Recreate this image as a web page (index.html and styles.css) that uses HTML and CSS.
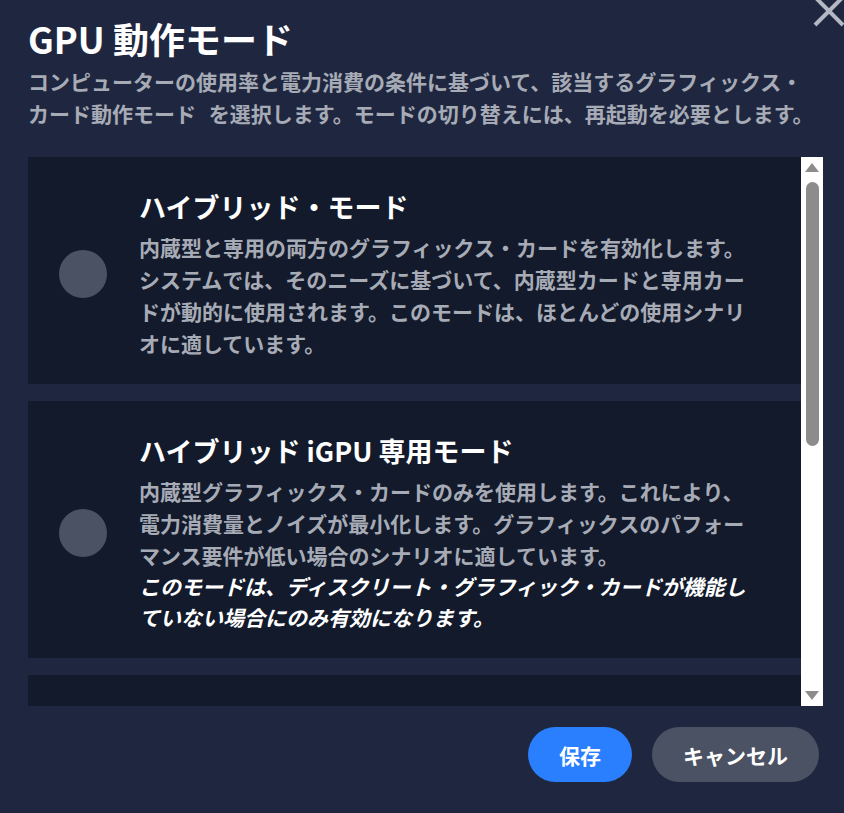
FILE: index.html
```html
<!DOCTYPE html>
<html lang="ja">
<head>
  <meta charset="UTF-8">
  <meta name="viewport" content="width=device-width, initial-scale=1.0">
  <title>GPU 動作モード</title>
  <link rel="stylesheet" href="styles.css">
</head>
<body>

  <div class="dialog">
    <button class="close-btn" aria-label="閉じる">
      <svg width="34" height="34" viewBox="0 0 34 34">
        <line x1="3" y1="3" x2="31" y2="31" stroke="#b3b8c3" stroke-width="4" />
        <line x1="31" y1="3" x2="3" y2="31" stroke="#b3b8c3" stroke-width="4" />
      </svg>
    </button>

    <h1 class="dialog-title">GPU 動作モード</h1>
    <p class="dialog-desc">コンピューターの使用率と電力消費の条件に基づいて、該当するグラフィックス・カード動作モード を選択します。モードの切り替えには、再起動を必要とします。</p>

    <div class="mode-area">
      <div class="mode-list">
        <div class="mode-card">
          <span class="radio"></span>
          <div class="mode-body">
            <h3 class="mode-title">ハイブリッド・モード</h3>
            <p class="mode-text">内蔵型と専用の両方のグラフィックス・カードを有効化します。システムでは、そのニーズに基づいて、内蔵型カードと専用カードが動的に使用されます。このモードは、ほとんどの使用シナリオに適しています。</p>
          </div>
        </div>

        <div class="mode-card">
          <span class="radio"></span>
          <div class="mode-body">
            <h3 class="mode-title">ハイブリッド iGPU 専用モード</h3>
            <p class="mode-text">内蔵型グラフィックス・カードのみを使用します。これにより、電力消費量とノイズが最小化します。グラフィックスのパフォーマンス要件が低い場合のシナリオに適しています。</p>
            <p class="mode-note">このモードは、ディスクリート・グラフィック・カードが機能していない場合にのみ有効になります。</p>
          </div>
        </div>

        <!-- next mode, only its top edge is in view -->
        <div class="mode-card mode-card-next"></div>
      </div>

      <div class="scrollbar">
        <span class="arrow up"></span>
        <div class="track">
          <div class="thumb"></div>
        </div>
        <span class="arrow down"></span>
      </div>
    </div>

    <div class="dialog-footer">
      <button class="btn btn-save">保存</button>
      <button class="btn btn-cancel">キャンセル</button>
    </div>
  </div>

</body>
</html>
```

FILE: styles.css
```css
body {
  margin: 0;
  padding: 0;
  background-color: #1f2740;
  font-family: "Noto Sans CJK JP", "Noto Sans", sans-serif;
  font-weight: bold;
  overflow: hidden;
}

.dialog {
  position: relative;
  height: 813px;
  box-sizing: border-box;
  padding: 16px 21px 0 28px;
}

.close-btn {
  position: absolute;
  top: -6px;
  left: 812px;
  padding: 0;
  border: none;
  background: none;
  cursor: pointer;
}

.close-btn svg {
  display: block;
}

.dialog-title {
  margin: 0;
  font-size: 36px;
  line-height: 44px;
  color: #ffffff;
}

.dialog-desc {
  margin: 5px 0 0;
  font-size: 21px;
  line-height: 32px;
  word-spacing: 8px;
  color: #a7abb6;
}

.mode-area {
  display: flex;
  margin-top: 28px;
  height: 549px;
}

.mode-list {
  flex: 1;
  overflow: hidden;
  display: flex;
  flex-direction: column;
  gap: 17px;
}

.mode-card {
  flex-shrink: 0;
  display: flex;
  align-items: center;
  gap: 32px;
  padding: 32px 40px 25px 31px;
  background-color: #121a2b;
}

.mode-card-next {
  min-height: 200px;
}

.radio {
  flex-shrink: 0;
  width: 48px;
  height: 48px;
  border-radius: 50%;
  background-color: #4b5264;
}

.mode-body {
  flex: 1;
}

.mode-title {
  margin: 0 0 6px;
  font-size: 27px;
  line-height: 36px;
  color: #ffffff;
}

.mode-text,
.mode-note {
  margin: 0;
  font-size: 21px;
  line-height: 32px;
  color: #a7abb6;
}

.mode-note {
  line-height: 31px;
  color: #ffffff;
  font-style: italic;
}

.scrollbar {
  width: 22px;
  flex-shrink: 0;
  background-color: #ffffff;
  display: flex;
  flex-direction: column;
  align-items: center;
}

.arrow {
  width: 0;
  height: 0;
  border-left: 7px solid transparent;
  border-right: 7px solid transparent;
}

.arrow.up {
  margin-top: 6px;
  border-bottom: 9px solid #8c8c8c;
}

.arrow.down {
  margin-bottom: 6px;
  border-top: 9px solid #8c8c8c;
}

.track {
  flex: 1;
  width: 100%;
  padding-top: 10px;
  box-sizing: border-box;
  display: flex;
  justify-content: center;
}

.thumb {
  width: 13px;
  height: 264px;
  border-radius: 7px;
  background-color: #8c8c8c;
}

.dialog-footer {
  display: flex;
  justify-content: flex-end;
  gap: 20px;
  margin-top: 21px;
  padding-right: 4px;
}

.btn {
  height: 55px;
  padding: 0 31px;
  border: none;
  border-radius: 28px;
  font-family: inherit;
  font-weight: bold;
  font-size: 21px;
  color: #ffffff;
  cursor: pointer;
}

.btn-save {
  background-color: #2a7fff;
}

.btn-cancel {
  background-color: #4b5264;
}
```
